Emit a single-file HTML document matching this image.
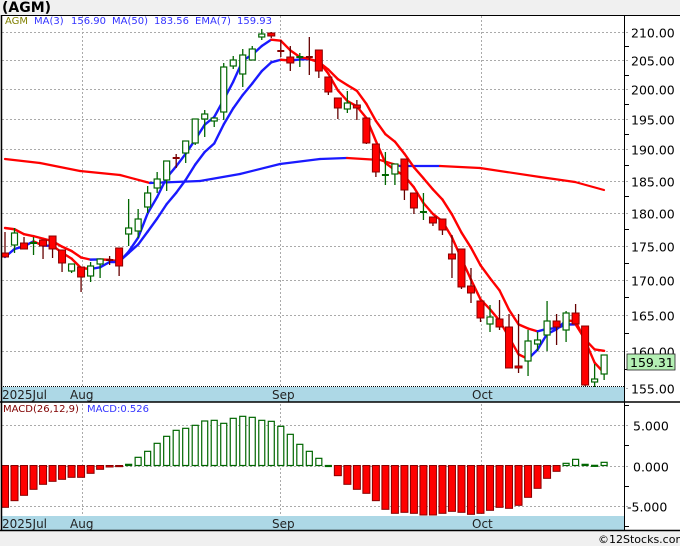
<!DOCTYPE html>
<html><head><meta charset="utf-8"><style>
html,body{margin:0;padding:0;background:#f0f0f0;}
body{width:680px;height:546px;overflow:hidden;position:relative;font-family:"Liberation Sans","DejaVu Sans",sans-serif;}
</style></head><body>
<svg id="s" width="680" height="546" xmlns="http://www.w3.org/2000/svg" style="position:absolute;left:0;top:0">
<rect x="0" y="0" width="680" height="546" fill="#f0f0f0"/>
<rect x="1" y="15" width="679" height="516" fill="#fff"/>
<text x="2" y="12" font-size="14" font-weight="bold" fill="#000" font-family="DejaVu Sans, sans-serif">(AGM)</text>
<g id="grid"></g>
<g id="plot"></g>
<rect x="1" y="387" width="623" height="15" fill="#add8e6"/>
<rect x="1" y="516" width="623" height="14" fill="#add8e6"/>
<g font-size="12" fill="#222" font-family="DejaVu Sans, sans-serif">
<text x="2" y="399">2025Jul</text><text x="70" y="399">Aug</text><text x="272" y="399">Sep</text><text x="472" y="399">Oct</text>
<text x="2" y="528">2025Jul</text><text x="70" y="528">Aug</text><text x="272" y="528">Sep</text><text x="472" y="528">Oct</text>
</g>
<line x1="0" y1="402" x2="680" y2="402" stroke="#000" stroke-width="1.5"/>
<line x1="0" y1="530.5" x2="680" y2="530.5" stroke="#000" stroke-width="1.5"/>
<line x1="1" y1="15.5" x2="680" y2="15.5" stroke="#000" stroke-width="1"/>
<line x1="1.5" y1="15" x2="1.5" y2="531" stroke="#000" stroke-width="1.5"/>
<line x1="624.5" y1="15" x2="624.5" y2="531" stroke="#000" stroke-width="1"/>
<line x1="1" y1="386.5" x2="624" y2="386.5" stroke="#000" stroke-width="1" stroke-dasharray="1,1"/>
<g font-size="10" font-family="DejaVu Sans, sans-serif">
<text x="5" y="24" fill="#808000">AGM</text>
<text x="34" y="24" fill="#3333ff">MA(3)</text>
<text x="71" y="24" fill="#3333ff">156.90</text>
<text x="112" y="24" fill="#3333ff">MA(50)</text>
<text x="154" y="24" fill="#3333ff">183.56</text>
<text x="195" y="24" fill="#3333ff">EMA(7)</text>
<text x="237" y="24" fill="#3333ff">159.93</text>
<text x="3" y="412" fill="#800000">MACD(26,12,9)</text>
<text x="87" y="412" fill="#3333ff">MACD:0.526</text>
</g>
<g id="axis" font-size="12.5" fill="#000" font-family="DejaVu Sans, sans-serif"></g>
<rect x="627" y="354" width="48" height="16" fill="#b4f0b4" stroke="#222" stroke-width="0.8"/>
<text x="630" y="367" font-size="12.5" font-family="DejaVu Sans, sans-serif" fill="#000">159.31</text>
<text x="598" y="543" font-size="11" font-family="DejaVu Sans, sans-serif" fill="#000">©12Stocks.com</text>
</svg>
<script>
var NS="http://www.w3.org/2000/svg";
function el(p,t,a){var e=document.createElementNS(NS,t);for(var k in a)e.setAttribute(k,a[k]);document.getElementById(p).appendChild(e);return e;}
function py(p){return 32+1172*(Math.log(210)-Math.log(p));}
[82,280,481].forEach(function(x){el('grid','line',{x1:x+.5,y1:16,x2:x+.5,y2:531,stroke:'#aaa','stroke-dasharray':'2,2'});});
for(var p=155;p<=210;p+=5){var y=Math.round(py(p))+.5;el('grid','line',{x1:2,y1:y,x2:630,y2:y,stroke:'#aaa','stroke-dasharray':'2,2'});
 var t=el('axis','text',{x:631,y:y+5});t.textContent=p.toFixed(2);
 if(p<210){var ym=Math.round(py(p+2.5))+.5;el('axis','line',{x1:624,y1:ym,x2:629,y2:ym,stroke:'#000'});}}
function my(v){return 465.5-v*8.1;}
[5,0,-5].forEach(function(v){var y=Math.round(my(v))+.5;el('grid','line',{x1:2,y1:y,x2:630,y2:y,stroke:'#aaa','stroke-dasharray':'2,2'});
 var t=el('axis','text',{x:v<0?627:633,y:y+5});t.textContent=(v<0?'-':'')+Math.abs(v).toFixed(3);});
[-7.5,-2.5,2.5,7.5].forEach(function(v){var y=Math.round(my(v))+.5;el('axis','line',{x1:624,y1:y,x2:629,y2:y,stroke:'#000'});});
var C=[[253,257,232,257,'r'],[233,245,228,253,'g'],[243,249,237,249,'r'],[242,243,237,255,'c'],[240,246,240,259,'r'],[236,249,236,258,'r'],[250,263,250,272,'r'],[264,271,264,273,'g'],[267,277,267,292,'r'],[266,276,262,282,'g'],[259,264,259,278,'g'],[259,261,256,265,'d'],[248,266,248,276,'r'],[228,234,199,246,'g'],[219,231,209,238,'g'],[193,207,186,213,'g'],[179,188,172,193,'g'],[161,180,161,191,'g'],[157,159,154,168,'d'],[141,153,141,163,'g'],[119,143,119,145,'g'],[114,119,110,137,'g'],[118,121,118,127,'g'],[67,112,63,120,'g'],[60,66,56,69,'g'],[55,74,49,87,'g'],[49,60,46,60,'g'],[34,37,29,40,'g'],[33,36,32,38,'r'],[50,52,40,57,'d'],[57,63,46,71,'r'],[56,58,53,67,'c'],[56,58,37,75,'d'],[50,71,50,78,'r'],[77,92,77,95,'r'],[98,108,98,119,'r'],[103,109,91,113,'g'],[105,108,100,120,'r'],[118,143,118,144,'r'],[144,172,144,177,'r'],[174,176,152,185,'c'],[164,174,164,185,'g'],[159,190,159,200,'r'],[193,208,193,214,'r'],[211,213,193,220,'c'],[217,223,217,226,'r'],[219,230,219,235,'r'],[254,259,235,278,'r'],[249,287,249,289,'r'],[286,293,268,303,'r'],[301,318,301,322,'r'],[317,324,305,332,'g'],[319,327,300,330,'r'],[327,368,314,368,'r'],[366,368,314,373,'r'],[341,361,330,376,'g'],[340,344,332,351,'g'],[321,335,301,351,'g'],[321,327,314,345,'r'],[313,330,311,342,'g'],[313,324,304,324,'r'],[326,385,326,386,'r'],[379,382,364,387,'g'],[355,374,355,380,'g']];
var M=[307,287,271,253,238,229,223,217,217,205,193,186,185,178,157,139,115,94,76,70,61,48,46,55,40,34,37,46,49,64,88,118,139,160,184,212,238,253,265,287,313,325,322,325,330,330,325,319,322,328,325,316,307,310,301,277,250,220,199,175,163,178,181,172];
function X(i){return 5+i*9.51;}
M.forEach(function(z,i){var y=405+z/3,x=X(i);var top=Math.min(y,465.5),h=Math.max(Math.abs(y-465.5),1);
 if(z>184) el('plot','rect',{x:x-3.5,y:top,width:7,height:h,fill:'#f00',stroke:'#800','stroke-width':1});
 else el('plot','rect',{x:x-3,y:top,width:6,height:h,fill:'#fff',stroke:'#060','stroke-width':1.2});});
function drawLine(pts,w){for(var i=1;i<pts.length;i++){var a=pts[i-1],b=pts[i];el('plot','line',{x1:a[0],y1:a[1],x2:b[0],y2:b[1],stroke:b[1]<=a[1]?'#1a1aff':'#f00','stroke-width':w,'stroke-linecap':'round'});}}
drawLine([[5,159],[40,163],[80,171],[120,175],[150,183],[200,181],[240,174],[280,164],[320,159],[347,158],[380,160],[400,166],[440,166],[480,168],[540,177],[575,182],[604,190]],2.2);
var cl=C.map(function(c){return c[4]=='r'||c[4]=='d'?c[1]:c[0];});
var ma=[],em=[],e=228;
for(var i=0;i<cl.length;i++){var s=cl[Math.max(0,i-2)]+cl[Math.max(0,i-1)]+cl[i];ma.push([X(i),s/3]);if(i>0)e=e+(cl[i]-e)*0.25;em.push([X(i),e]);}
drawLine(em,2.4);drawLine(ma,2.4);
C.forEach(function(c,i){var x=X(i),t=c[4];
 var wc=t=='g'||t=='c'?'#060':'#600';
 el('plot','line',{x1:x,y1:c[2],x2:x,y2:c[3],stroke:wc,'stroke-width':1.3});
 if(t=='r') el('plot','rect',{x:x-3.5,y:c[0],width:7,height:Math.max(c[1]-c[0],2),fill:'#f00',stroke:'#800'});
 else if(t=='g') el('plot','rect',{x:x-3,y:c[0],width:6,height:Math.max(c[1]-c[0],2),fill:'#fff',stroke:'#060','stroke-width':1.2});
 else el('plot','rect',{x:x-3.5,y:c[0],width:7,height:2,fill:t=='c'?'#060':'#800'});
});
</script>
</body></html>
